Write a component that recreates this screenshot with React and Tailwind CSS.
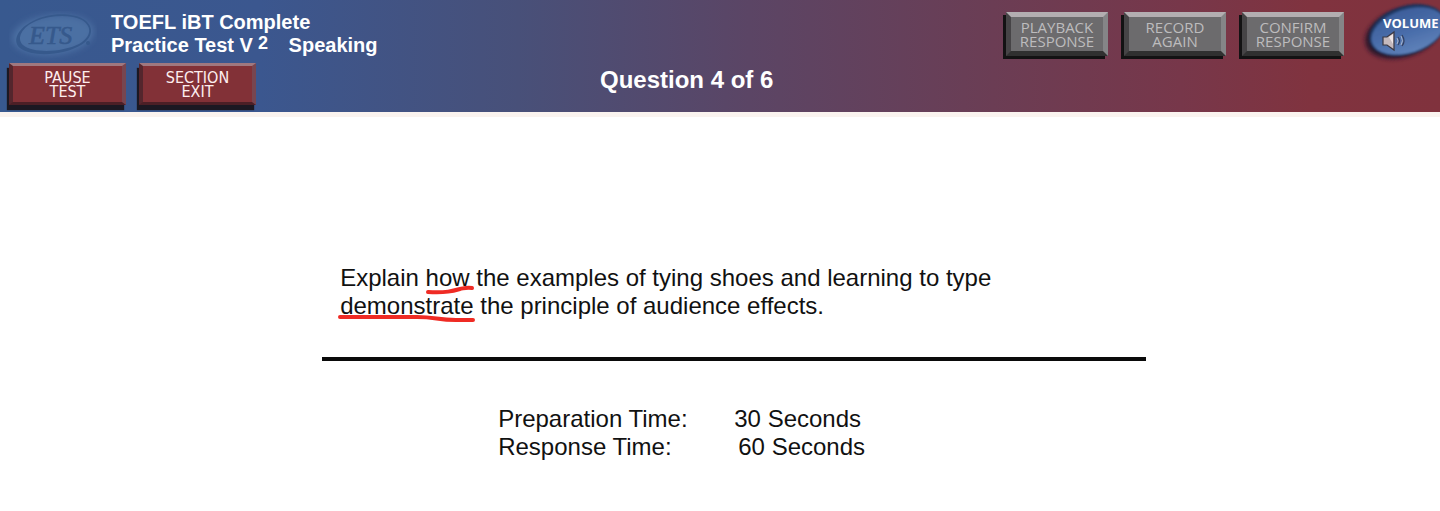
function EtsLogo() {
  return (
    <svg className="h-[50px] w-[88px]" viewBox="0 0 88 50" role="img" aria-label="ETS">
      <defs>
        <filter id="etsBlur" x="-20%" y="-20%" width="140%" height="140%">
          <feGaussianBlur stdDeviation="3" />
        </filter>
      </defs>
      <ellipse cx="44" cy="24" rx="41" ry="20" fill="#4b6fa3" transform="rotate(-6 44 24)" filter="url(#etsBlur)" />
      <path
        fillRule="evenodd"
        d="M24 10C38 2 62 1 74 8C86 15 84 27 72 34C56 44 24 47 11 37C3 30 8 18 24 10ZM27 10C13 16 7 27 14 34C25 43 54 41 70 33C82 26 84 16 73 9C62 3 41 4 27 10Z"
        fill="#36598c"
      />
      <text
        x="20"
        y="33"
        className="font-['Liberation_Serif',serif] text-[26px] italic"
        fill="#36598c"
        stroke="#36598c"
        strokeWidth="0.6"
      >
        ETS
      </text>
      <circle cx="79" cy="32" r="2" fill="#36598c" />
    </svg>
  );
}

function RedButton({ children }) {
  return (
    <button
      type="button"
      className="flex h-[42px] w-[117px] items-center justify-center border-x-4 border-y-[3px] border-t-[#a0787f] border-r-[#774650] border-b-[#4b1f26] border-l-[#54262d] bg-[#823137] font-['DejaVu_Sans_Condensed','DejaVu_Sans',sans-serif] text-[16px] leading-[14px] text-[#fdeeee] shadow-[-2px_5px_1px_#1b1822]"
    >
      <span className="pt-0.5">{children}</span>
    </button>
  );
}

function GrayButton({ children }) {
  return (
    <button
      type="button"
      className="flex h-[44px] w-[102px] items-center justify-center border-x-[5px] border-y-[5px] border-t-[#b3aeb1] border-r-[#858587] border-b-[#303030] border-l-[#464446] bg-[#6c6b6d] font-['Open_Sans',sans-serif] text-[15px] leading-[14px] font-medium text-[#bdbcbd] shadow-[-3px_3px_0_#131213]"
    >
      <span>{children}</span>
    </button>
  );
}

function VolumeButton() {
  return (
    <button type="button" aria-label="Volume" className="block h-[64px] w-[84px] overflow-hidden">
      <svg className="h-[64px] w-[84px]" viewBox="0 0 84 64" aria-hidden="true">
        <defs>
          <linearGradient id="volFace" x1="0" y1="0" x2="0" y2="1">
            <stop offset="0" stopColor="#3d5f9b" />
            <stop offset="0.5" stopColor="#486ca9" />
            <stop offset="1" stopColor="#5f82b9" />
          </linearGradient>
          <filter id="volSoft" x="-20%" y="-20%" width="140%" height="140%">
            <feGaussianBlur stdDeviation="2.2" />
          </filter>
          <filter id="volEdge">
            <feGaussianBlur stdDeviation="0.8" />
          </filter>
        </defs>
        <ellipse cx="47" cy="33" rx="39" ry="24" fill="#29182c" transform="rotate(-18 47 33)" filter="url(#volSoft)" />
        <ellipse cx="51" cy="30" rx="39" ry="24" fill="#1d345e" transform="rotate(-18 51 30)" filter="url(#volEdge)" />
        <ellipse cx="52" cy="31" rx="38" ry="22" fill="url(#volFace)" transform="rotate(-18 52 31)" filter="url(#volEdge)" />
        <text x="27" y="28" fill="#ffffff" className="font-['Open_Sans',sans-serif] text-[13px] font-bold">
          VOLUME
        </text>
        <path d="M27 37H31L38 32V50L31 45H27Z" fill="#c5b9bd" stroke="#3a3842" strokeWidth="1.2" />
        <path d="M33 37L37 34V44Z" fill="#efe6e6" />
        <path d="M42 37Q45 41 42 45M46 35Q50 41 46 46" fill="none" stroke="#343f5e" strokeWidth="1.2" />
        <path d="M41 38Q43 41 41 44M45 36Q48 41 45 45" fill="none" stroke="#a9b4ca" strokeWidth="1" />
      </svg>
    </button>
  );
}

export default function App() {
  return (
    <div className="min-h-screen bg-white font-['Liberation_Sans',Arial,sans-serif] text-[#111111]">
      <header className="flex h-[117px] items-start justify-between border-b-[5px] border-[#faf3ef] bg-[linear-gradient(90deg,#38598f_0%,#3b578f_18%,#485079_36%,#5b4565_52%,#6b3d54_69%,#77374a_82%,#80333f_91%,#80323d_100%)]">
        <div className="flex w-[600px] shrink-0 flex-col pl-[9px]">
          <div className="flex h-[63px] gap-[14px] pt-[11px]">
            <EtsLogo />
            <h1 className="text-[20px] leading-[23px] font-bold whitespace-pre text-white">
              TOEFL iBT Complete
              <br />
              Practice Test V<span className="relative bottom-[3px] mr-1 text-[18px] leading-none"> 2</span>
              {"   Speaking"}
            </h1>
          </div>
          <div className="flex gap-[13px]">
            <RedButton>
              PAUSE
              <br />
              TEST
            </RedButton>
            <RedButton>
              SECTION
              <br />
              EXIT
            </RedButton>
          </div>
        </div>
        <h2 className="grow pt-[66px] text-[24px] leading-[28px] font-bold whitespace-nowrap text-white">
          Question 4 of 6
        </h2>
        <div className="flex shrink-0 gap-3">
          <div className="flex gap-4 pt-[12px]">
            <GrayButton>
              PLAYBACK
              <br />
              RESPONSE
            </GrayButton>
            <GrayButton>
              RECORD
              <br />
              AGAIN
            </GrayButton>
            <GrayButton>
              CONFIRM
              <br />
              RESPONSE
            </GrayButton>
          </div>
          <VolumeButton />
        </div>
      </header>

      <main className="pt-[147px] pl-7 text-[24px] leading-[28px]">
        <div className="mx-auto w-7/12">
          <p className="pl-[18px]">
            Explain{" "}
            <span className="relative">
              how
              <svg className="absolute top-[20px] -left-px h-[12px] w-[50px]" viewBox="0 0 50 12" aria-hidden="true">
                <path d="M3 8C21 9 28 7 35 5C40 4 42 3 47 4" fill="none" stroke="#ef2b24" strokeWidth="4" strokeLinecap="round" />
              </svg>
            </span>{" "}
            the examples of tying shoes and learning to type
            <br />
            <span className="relative">
              demonstrate
              <svg className="absolute top-[20px] -left-[3px] h-[12px] w-[140px]" viewBox="0 0 140 12" aria-hidden="true">
                <path d="M3 5H80C99 5 100 8 119 8H136" fill="none" stroke="#ef2b24" strokeWidth="4" strokeLinecap="round" />
              </svg>
            </span>{" "}
            the principle of audience effects.
          </p>
          <hr className="mt-[37px] border-t-4 border-[#0a0a0a]" />
          <div className="pt-[44px] pl-[176px] whitespace-pre">
            <p>{"Preparation Time:       30 Seconds"}</p>
            <p>{"Response Time:          60 Seconds"}</p>
          </div>
        </div>
      </main>
    </div>
  );
}
